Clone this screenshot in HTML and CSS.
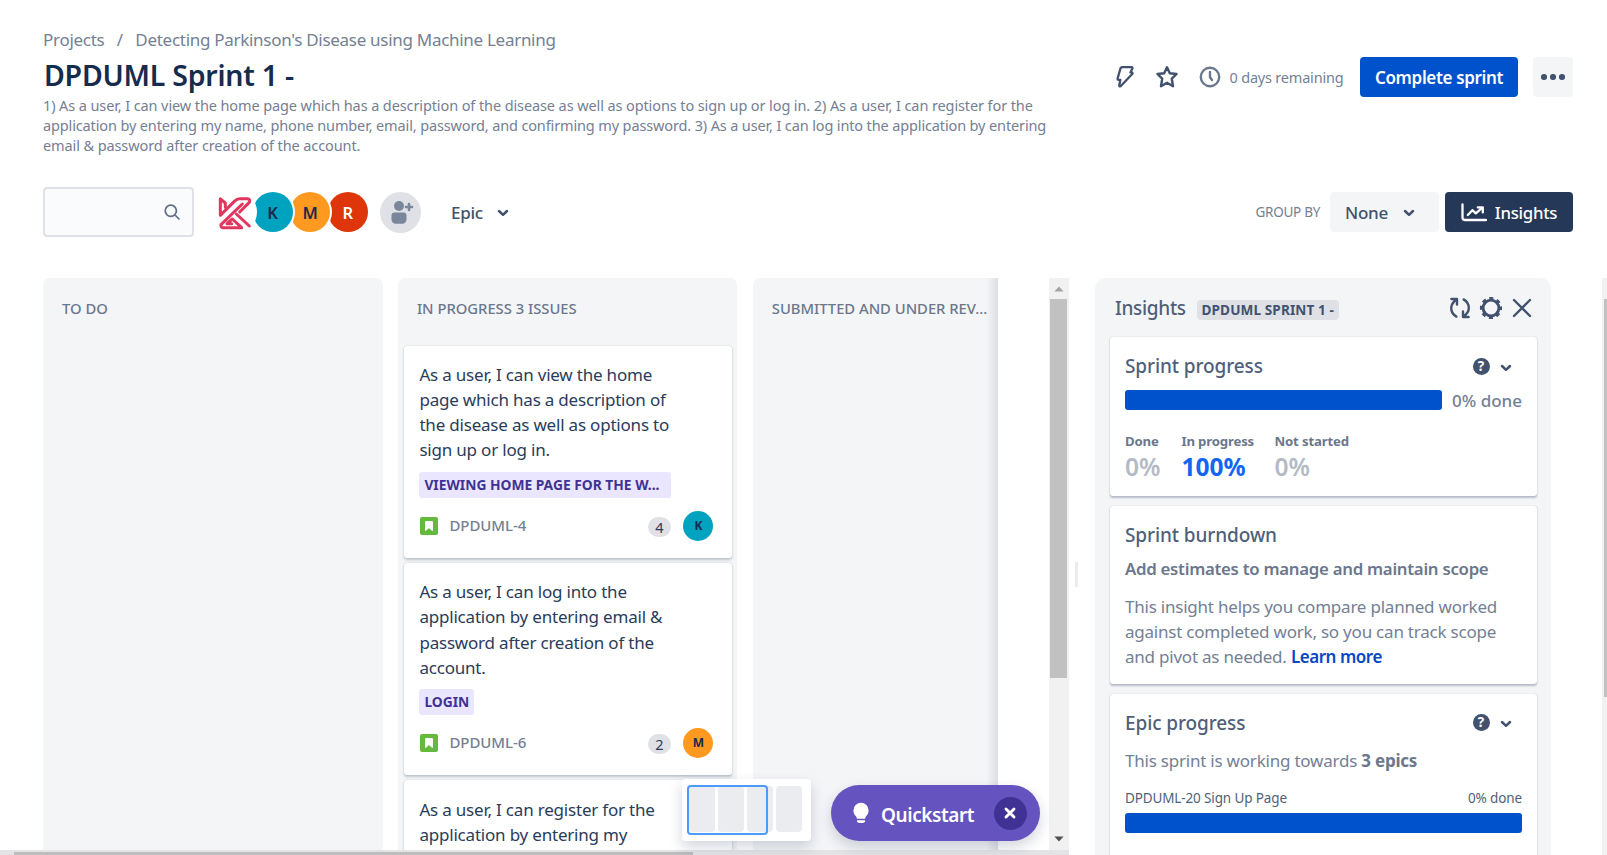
FILE: index.html
```html
<!DOCTYPE html>
<html lang="en">
<head>
<meta charset="utf-8">
<title>DPDUML Sprint 1 -</title>
<link rel="stylesheet" href="styles.css">
</head>
<body>
<div class="page">
  <header class="header">
    <div class="heading">
      <nav class="crumbs"><span>Projects</span><span class="slash">/</span><span>Detecting Parkinson's Disease using Machine Learning</span></nav>
      <h1 class="title">DPDUML Sprint 1 -</h1>
      <p class="goal">1) As a user, I can view the home page which has a description of the disease as well as options to sign up or log in. 2) As a user, I can register for the<br><span class="tight">application by entering my name, phone number, email, password, and confirming my password. 3) As a user, I can log into the application by entering</span><br>email &amp; password after creation of the account.</p>
    </div>
    <div class="actions">
      <svg class="bolt" width="20" height="24" viewBox="0 0 20 24" fill="none" stroke="#42526E" stroke-width="2.3" stroke-linejoin="round"><path d="M6.8 2.2 H16.6 Q17.8 2.4 17.4 3.4 L15.4 7.4 H17 Q18 8 17.2 9 L5.6 21.2 Q4 21.8 4.2 20.2 L5.4 14.8 H3.4 Q2.2 14.4 2.6 13.4 L5.6 3 Z"/></svg>
      <svg class="star" width="24" height="24" viewBox="0 0 24 24" fill="none" stroke="#42526E" stroke-width="2.4" stroke-linejoin="round"><path d="M12 2.3 L14.8 8.3 L21.6 9 L16.8 13.7 L18 21.2 L12 17.8 L6 21.2 L7.2 13.7 L2.4 9 L9.2 8.3 Z"/></svg>
      <svg class="clock" width="22" height="22" viewBox="0 0 22 22" fill="none" stroke="#6B778C" stroke-width="2.4" stroke-linecap="round"><circle cx="11" cy="11" r="9.2"/><path d="M11 6 V11.3 L13 14"/></svg>
      <span class="remaining">0 days remaining</span>
      <button class="btn primary">Complete sprint</button>
      <button class="btn more"><i></i><i></i><i></i></button>
    </div>
  </header>

  <div class="toolbar">
    <div class="search">
      <svg width="18" height="18" viewBox="0 0 18 18" fill="none" stroke="#5E6C84" stroke-width="1.7" stroke-linecap="round"><circle cx="7.8" cy="7.8" r="5.6"/><path d="M12 12 L16 16"/></svg>
    </div>
    <div class="avatars">
      <span class="avatar logo"><svg width="36" height="36" viewBox="0 0 108 108" fill="none" stroke="#E2365F" stroke-width="9" stroke-linejoin="round" stroke-linecap="round"><path d="M10 15 V64 L52 22 Q60 14 68 14 H92 Q101 16 97 25 L68 54"/><path d="M10 15 L25 27 V40"/><path d="M76 30 L12 92 Q10 101 20 101 H74 L46 75 L30 89 H44"/><path d="M58 60 L97 96"/></svg></span>
      <span class="avatar teal">K</span><span class="avatar orange">M</span><span class="avatar red">R</span>
    </div>
    <span class="add"><svg width="24" height="24" viewBox="0 0 24 24" fill="#7A869A"><circle cx="9" cy="6" r="5"/><path d="M1.5 15.5 a3 3 0 0 1 3-3 h9 a3 3 0 0 1 3 3 v4 a4.2 4.2 0 0 1-4.2 4.2 h-6.6 a4.2 4.2 0 0 1-4.2-4.2 z"/><path d="M19 4 v6 M16 7 h6" stroke="#7A869A" stroke-width="2.6" stroke-linecap="round"/></svg></span>
    <span class="epic">Epic <svg class="chev" width="12" height="8" viewBox="0 0 12 8"><path d="M2 2 L6 5.8 L10 2"/></svg></span>
    <span class="spacer"></span>
    <span class="groupby">GROUP BY</span>
    <button class="btn none">None <svg class="chev" width="12" height="8" viewBox="0 0 12 8"><path d="M2 2 L6 5.8 L10 2"/></svg></button>
    <button class="btn insights-btn"><svg width="26" height="20" viewBox="0 0 26 20" fill="none" stroke="#fff" stroke-width="2.3" stroke-linecap="round" stroke-linejoin="round"><path d="M1.5 2.5 V15.5 Q1.5 18 4.2 18 H25"/><path d="M6.8 13 L11.4 8.2 L14.8 11.4 L21 6 M16.8 5.4 H21.8 V10.4"/></svg><span>Insights</span></button>
  </div>

  <main class="main">
    <section class="left">
      <div class="boardrow">
        <div class="board">
          <div class="column"><h2>TO DO</h2></div>
          <div class="column">
            <h2>IN PROGRESS 3 ISSUES</h2>
            <article class="card">
              <p>As a user, I can view the home<br>page which has a description of<br>the disease as well as options to<br>sign up or log in.</p>
              <span class="tag wide">VIEWING HOME PAGE FOR THE W...</span>
              <footer><svg class="story" width="18" height="18" viewBox="0 0 18 18"><rect width="18" height="18" rx="2" fill="#63BA3C"/><path d="M5.6 4.6 H12.4 V13.6 L9 10.6 L5.6 13.6 Z" fill="#fff" stroke="#fff" stroke-linejoin="round"/></svg><span class="key">DPDUML-4</span><span class="points">4</span><span class="small teal">K</span></footer>
            </article>
            <article class="card">
              <p>As a user, I can log into the<br>application by entering email &amp;<br>password after creation of the<br>account.</p>
              <span class="tag">LOGIN</span>
              <footer><svg class="story" width="18" height="18" viewBox="0 0 18 18"><rect width="18" height="18" rx="2" fill="#63BA3C"/><path d="M5.6 4.6 H12.4 V13.6 L9 10.6 L5.6 13.6 Z" fill="#fff" stroke="#fff" stroke-linejoin="round"/></svg><span class="key">DPDUML-6</span><span class="points">2</span><span class="small orange">M</span></footer>
            </article>
            <article class="card">
              <p>As a user, I can register for the<br>application by entering my</p>
            </article>
          </div>
          <div class="column last"><h2>SUBMITTED AND UNDER REV...</h2></div>
          <div class="fade"></div>
        </div>
        <div class="vscroll">
          <svg width="12" height="8" viewBox="0 0 12 8"><path d="M1.4 6.5 L6 1.5 L10.6 6.5 Z" fill="#A3A3A3"/></svg>
          <div class="thumb"></div>
          <svg width="12" height="8" viewBox="0 0 12 8"><path d="M1.4 1.5 L6 6.5 L10.6 1.5 Z" fill="#505050"/></svg>
        </div>
      </div>
      <div class="hscroll"><div class="hthumb"></div></div>
    </section>
    <div class="handle"></div>
    <aside class="insights">
      <div class="ihead">
        <h2>Insights</h2><span class="lozenge">DPDUML SPRINT 1 -</span><span class="spacer"></span>
        <svg width="22" height="22" viewBox="0 0 22 22" fill="none" stroke="#42526E" stroke-width="2.4" stroke-linecap="round" stroke-linejoin="round"><path d="M2.4 2 H8 V7.6 M7.6 2.4 Q2.2 6.2 2.2 11 Q2.2 16.6 7.4 19.6"/><path d="M19.6 20 H14 V14.4 M14.4 19.6 Q19.8 15.8 19.8 11 Q19.8 5.4 14.6 2.4"/></svg>
        <svg class="gear" width="24" height="24" viewBox="0 0 24 24" fill="none" stroke="#42526E"><circle cx="12" cy="12" r="7.9" stroke-width="2.9"/><circle cx="12" cy="12" r="9.8" stroke-width="2.6" stroke-dasharray="4 3.697" stroke-dashoffset="2"/></svg>
        <svg class="close" width="20" height="20" viewBox="0 0 20 20" fill="none" stroke="#42526E" stroke-width="2.4" stroke-linecap="round"><path d="M2 2 L18 18 M18 2 L2 18"/></svg>
      </div>
      <section class="panel p1">
        <div class="ptitle"><h3>Sprint progress</h3><span class="help">?</span><svg class="chev" width="12" height="8" viewBox="0 0 12 8"><path d="M2 2 L6 5.8 L10 2"/></svg></div>
        <div class="progress"><div class="bar"></div><span>0% done</span></div>
        <div class="stats">
          <div><b>Done</b><strong>0%</strong></div>
          <div><b>In progress</b><strong class="blue">100%</strong></div>
          <div><b>Not started</b><strong>0%</strong></div>
        </div>
      </section>
      <section class="panel p2">
        <div class="ptitle"><h3>Sprint burndown</h3></div>
        <h4>Add estimates to manage and maintain scope</h4>
        <p class="text">This insight helps you compare planned worked<br>against completed work, so you can track scope<br>and pivot as needed. <a>Learn more</a></p>
      </section>
      <section class="panel p3">
        <div class="ptitle"><h3>Epic progress</h3><span class="help">?</span><svg class="chev" width="12" height="8" viewBox="0 0 12 8"><path d="M2 2 L6 5.8 L10 2"/></svg></div>
        <p class="text">This sprint is working towards <b>3 epics</b></p>
        <div class="epicrow"><span>DPDUML-20 Sign Up Page</span><span>0% done</span></div>
        <div class="bar full"></div>
      </section>
    </aside>
    <div class="pagescroll"><div></div></div>
  </main>

  <div class="minimap"><i></i><i></i><i></i><i></i><div class="viewport"></div></div>
  <div class="quickstart">
    <svg width="18" height="22" viewBox="0 0 18 22" fill="#fff"><path d="M9 .8 A7.6 7.6 0 0 0 1.4 8.4 C1.4 11.4 3 13 4.2 14.6 L5 16.8 H13 L13.8 14.6 C15 13 16.6 11.4 16.6 8.4 A7.6 7.6 0 0 0 9 .8 Z"/><path d="M5 18.2 H13 V19.2 Q12.6 21 10.8 21 H7.2 Q5.4 21 5 19.2 Z"/></svg>
    <span class="qlabel">Quickstart</span>
    <span class="qclose"><svg width="14" height="14" viewBox="0 0 14 14" stroke="#fff" stroke-width="2.9" stroke-linecap="round"><path d="M3 3 L11 11 M11 3 L3 11"/></svg></span>
  </div>
</div>
</body>
</html>
```
FILE: styles.css
```css
* { box-sizing: border-box; }
body { margin: 0; background: #fff; font-family: "Noto Sans", "Open Sans", sans-serif; color: #172B4D; }
h1, h2, h3, h4, p { margin: 0; }
button { border: 0; font-family: inherit; }
svg { display: block; flex: none; }
.page { position: relative; width: 1607px; height: 855px; overflow: hidden; display: flex; flex-direction: column; white-space: nowrap; }
.spacer { flex: 1; }
.chev { fill: none; stroke: #42526E; stroke-width: 2.5; stroke-linecap: round; stroke-linejoin: round; }

.header { display: flex; justify-content: space-between; height: 187px; padding: 28px 34px 0 43px; }
.crumbs { display: flex; font-size: 17px; line-height: 24px; letter-spacing: -.29px; color: #748094; }
.slash { width: 31px; text-align: center; }
.title { margin-top: 5px; padding-left: 1px; font-size: 28.5px; line-height: 36px; font-weight: 600; letter-spacing: -.24px; }
.goal { margin-top: 2px; font-size: 14.5px; line-height: 20.2px; letter-spacing: -.105px; color: #748094; }
.tight { letter-spacing: -.135px; }
.actions { display: flex; align-items: center; height: 40px; margin-top: 29px; }
.star { margin-left: 20.5px; }
.clock { margin-left: 20px; }
.remaining { margin-left: 8.5px; width: 130.5px; font-size: 14.5px; letter-spacing: -.2px; color: #748094; }
.btn { display: flex; align-items: center; justify-content: center; height: 40px; border-radius: 4px; font-size: 17px; padding: 0; }
.primary { width: 158px; background: #0052CC; color: #fff; font-weight: 600; letter-spacing: -.35px; }
.more { width: 40px; margin-left: 15px; background: #F4F5F7; gap: 3.5px; }
.more i { width: 5.5px; height: 5.5px; border-radius: 50%; background: #42526E; }

.toolbar { display: flex; align-items: center; height: 50px; padding: 0 34px 0 43px; }
.search { display: flex; align-items: center; justify-content: flex-end; width: 151px; height: 50px; padding-right: 11.5px; border: 2px solid #DFE1E6; border-radius: 4px; background: #FAFBFC; }
.avatars { display: flex; margin-left: 21px; }
.avatar { display: flex; align-items: center; justify-content: center; position: relative; width: 40px; height: 40px; margin-right: -2.4px; border-radius: 50%; box-shadow: 0 0 0 2px #fff; font-size: 16.5px; font-weight: 600; }
.avatar.logo { z-index: 4; background: #fff; }
.avatar.teal { z-index: 3; }
.avatar.orange { z-index: 2; }
.avatar.red { z-index: 1; }
.teal { background: #00A3BF; color: #172B4D; }
.orange { background: #FF991F; color: #172B4D; }
.red { background: #DE350B; color: #fff; }
.add { display: flex; align-items: center; justify-content: center; width: 41px; height: 41px; margin-left: 15px; padding-left: 2px; border-radius: 50%; background: #DFE1E6; }
.epic { display: flex; align-items: center; gap: 14px; margin-left: 29.5px; font-size: 17px; font-weight: 500; letter-spacing: -.25px; color: #42526E; }
.epic .chev, .none .chev { margin-top: 1px; }
.groupby { margin-right: 9.5px; font-size: 13.5px; letter-spacing: -.28px; color: #748094; }
.none { width: 109px; background: #F4F5F7; justify-content: flex-start; padding-left: 15.5px; gap: 14.5px; font-weight: 500; letter-spacing: -.25px; color: #42526E; }
.insights-btn { width: 128px; margin-left: 6.5px; background: #253858; color: #fff; font-weight: 500; font-size: 16.8px; letter-spacing: -.3px; gap: 8px; }

.main { display: flex; height: 577px; margin-top: 41px; }
.left { width: 1069px; display: flex; flex-direction: column; }
.boardrow { display: flex; justify-content: space-between; height: 572px; padding-left: 43px; }
.board { position: relative; display: flex; gap: 15.4px; width: 955px; overflow: hidden; }
.column { flex: none; width: 339.5px; padding: 0 5.5px 0 6.5px; background: #F4F5F7; border-radius: 7px 7px 0 0; }
.column h2 { height: 67.7px; padding: 19.5px 0 0 12.5px; font-size: 14.8px; line-height: 20px; font-weight: 500; letter-spacing: -.02px; color: #6B778C; }
.fade { position: absolute; top: 0; right: 0; width: 12px; height: 100%; background: linear-gradient(to right, rgba(9,30,66,0), rgba(9,30,66,.1)); }
.card { height: 212px; margin-bottom: 5.2px; padding: 16.5px 15.5px 0 15px; background: #fff; border-radius: 3px; box-shadow: 0 1.3px 2.5px rgba(9,30,66,.22), 0 0 1px rgba(9,30,66,.2); }
.card p { font-size: 17px; line-height: 25.1px; letter-spacing: -.2px; color: #2A3C5B; }
.tag { display: inline-block; height: 26px; margin-top: 9px; padding: 0 5px; border-radius: 3px; background: #EAE6FF; color: #403294; font-size: 13.8px; line-height: 26px; font-weight: 700; vertical-align: top; }
.tag.wide { width: 251.5px; }
.card footer { display: flex; align-items: center; height: 30px; margin-top: 13px; padding: 0 3px 0 1px; }
.key { flex: 1; margin-left: 11px; font-size: 15px; line-height: 20px; margin-top: -1px; font-weight: 500; letter-spacing: -.06px; color: #748094; }
.points { width: 23px; height: 20px; margin: 3px 12.5px 0 0; border-radius: 10px; background: #DFE1E6; font-size: 14.5px; line-height: 20px; text-align: center; color: #2A3C5B; }
.small { width: 30px; height: 30px; border-radius: 50%; font-size: 12px; line-height: 29px; font-weight: 700; text-align: center; }
.vscroll { display: flex; flex-direction: column; align-items: center; width: 20.5px; padding: 7px 0; background: #F1F1F1; }
.thumb { flex: none; width: 17px; height: 379px; margin: 6px 0 auto; background: #C1C1C1; }
.hscroll { height: 5px; background: #E4E4E6; padding: 2px 0 0 14px; }
.hthumb { width: 679px; height: 3px; background: #BDBDBD; }
.handle { width: 3px; height: 25px; margin: 284px 17.5px 0 5.5px; background: #EBECF0; }

.insights { width: 456px; padding: 0 14px 0 15px; background: #F4F5F7; border-radius: 10px 10px 0 0; overflow: hidden; }
.ihead { display: flex; align-items: center; height: 59px; padding: 0 5.5px 0 5px; }
.ihead h2 { width: 81.5px; font-size: 19px; font-weight: 500; letter-spacing: -.3px; color: #505F79; }
.lozenge { height: 20px; margin-top: 4px; padding: 0 5px; border-radius: 4px; background: #DFE1E6; font-size: 13.6px; line-height: 20px; font-weight: 700; letter-spacing: .1px; color: #42526E; }
.gear { margin: 0 9px 0 7.5px; }
.panel { padding: 16px 15px 0; background: #fff; border-radius: 3px; box-shadow: 0 1.3px 2px rgba(9,30,66,.26), 0 0 1px rgba(9,30,66,.22); }
.p1 { height: 159px; }
.p2 { height: 178.5px; margin-top: 9.5px; }
.p3 { height: 240px; margin-top: 9.5px; }
.ptitle { display: flex; align-items: center; height: 26px; }
.ptitle h3 { flex: 1; font-size: 19px; line-height: 26px; font-weight: 500; letter-spacing: -.1px; color: #505F79; }
.ptitle .chev { margin: 3px 10px 0 10.5px; }
.help { width: 17px; height: 17px; border-radius: 50%; background: #42526E; color: #fff; font-size: 13.5px; line-height: 17px; font-weight: 700; text-align: center; }
.progress { display: flex; justify-content: space-between; margin-top: 11px; font-size: 17px; line-height: 21px; color: #748094; font-weight: 500; }
.bar { width: 317px; height: 20px; border-radius: 3px; background: #0052CC; }
.bar.full { width: 100%; margin-top: 5px; }
.stats { display: grid; grid-template-columns: 56.5px 93px auto; margin-top: 21px; }
.stats b, .stats strong { display: block; }
.stats b { font-size: 13.2px; line-height: 18px; letter-spacing: -.17px; color: #6B778C; }
.stats strong { margin-top: 3px; font-size: 24.5px; line-height: 28px; font-weight: 600; color: #B3BAC5; }
.stats .blue { color: #1565F5; font-weight: 700; }
.panel h4 { margin-top: 8px; font-size: 16.8px; line-height: 25px; font-weight: 600; letter-spacing: -.27px; color: #6B778C; }
.text { margin-top: 13.5px; font-size: 17px; line-height: 25.2px; letter-spacing: -.22px; color: #748094; }
.p3 .text { margin-top: 12.5px; }
.text a { color: #0747C6; font-weight: 600; letter-spacing: -.46px; }
.text b { color: #6B778C; }
.epicrow { display: flex; justify-content: space-between; margin-top: 14.5px; font-size: 13.5px; line-height: 20px; letter-spacing: -.13px; color: #505F79; }
.pagescroll { width: 5px; margin-left: auto; padding: 21px 0 0 2px; background: #F1F1F1; }
.pagescroll div { height: 398px; background: #C1C1C1; }

.minimap { position: absolute; left: 681.5px; top: 779px; display: flex; gap: 3px; width: 129.5px; height: 62px; padding: 7px 7.5px; background: #fff; border-radius: 4px; box-shadow: 0 6px 14px rgba(9,30,66,.18); }
.minimap i { width: 26px; height: 46px; border-radius: 4px; background: #EBECF0; }
.viewport { position: absolute; left: 5.5px; top: 5.5px; width: 80.5px; height: 50px; border: 2px solid #4C9AFF; border-radius: 4px; }
.quickstart { position: absolute; left: 831px; top: 785px; display: flex; align-items: center; width: 208.5px; height: 56px; padding: 0 13px 0 21px; border-radius: 28px; background: #6554C0; color: #fff; font-size: 19px; font-weight: 600; letter-spacing: -.43px; gap: 11px; box-shadow: 0 6px 14px rgba(9,30,66,.18); }
.qlabel { padding-top: 3px; }
.qclose { display: flex; align-items: center; justify-content: center; width: 33px; height: 33px; margin-left: auto; border-radius: 50%; background: #403294; }
```
